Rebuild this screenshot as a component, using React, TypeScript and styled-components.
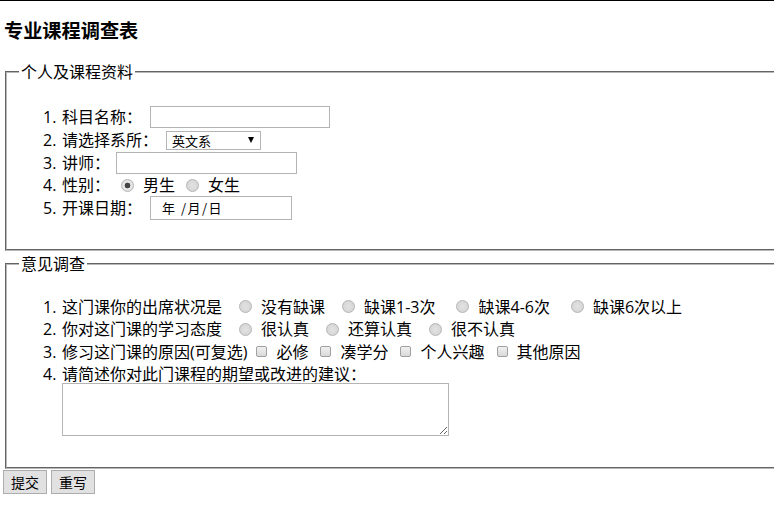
import React from "react";
import styled, { createGlobalStyle } from "styled-components";

const GlobalStyle = createGlobalStyle`
  html, body {
    margin: 0;
    padding: 0;
    overflow: hidden;
    background: #fff;
  }
  body {
    font-family: "Open Sans", "Noto Sans CJK SC", sans-serif;
    color: #000;
  }
`;

const Page = styled.div`
  width: 900px;
  padding: 0 3px;
  border-top: 1px solid #000;
`;

const Title = styled.h3`
  margin: 17px 0 19px;
  padding-left: 1px;
  font-family: "Noto Sans CJK SC", sans-serif;
  font-size: 19.2px;
  line-height: 24px;
  font-weight: bold;
`;

const Section = styled.fieldset<{ $top: number; $bottom: number }>`
  margin: 0 2px;
  padding: ${(p) => p.$top}px 12px ${(p) => p.$bottom}px;
  border: 2px groove #b8b8b8;
  min-width: 0;

  & + & {
    margin-top: 2px;
  }
`;

const Legend = styled.legend`
  padding: 0 2px;
  font-size: 16px;
  line-height: 22px;
`;

const List = styled.ol`
  margin: 0;
  padding: 0 0 0 24px;
  list-style: none;
  counter-reset: item;
`;

const Item = styled.li<{ $h: number; $stack?: boolean }>`
  counter-increment: item;
  display: flex;
  align-items: ${(p) => (p.$stack ? "flex-start" : "center")};
  height: ${(p) => (p.$stack ? "auto" : `${p.$h}px`)};
  font-size: 16px;
  line-height: ${(p) => p.$h}px;
  white-space: nowrap;

  &::before {
    content: counter(item) ".";
    flex: none;
    width: 19px;
  }
`;

const Stack = styled.div`
  display: flex;
  flex-direction: column;
`;

const TextBox = styled.input<{ $w: number; $gap: number }>`
  box-sizing: border-box;
  width: ${(p) => p.$w}px;
  height: 22px;
  margin: 0 0 0 ${(p) => p.$gap}px;
  padding: 0 4px;
  border: 1px solid #b4b4b4;
  background: #fff;
  font: inherit;
  font-size: 14px;
`;

const SelectWrap = styled.span`
  position: relative;
  display: inline-flex;
  margin-left: 8px;

  &::after {
    content: "";
    position: absolute;
    right: 7px;
    top: 6px;
    border-left: 3.5px solid transparent;
    border-right: 3.5px solid transparent;
    border-top: 6px solid #000;
    pointer-events: none;
  }
`;

const Select = styled.select`
  appearance: none;
  box-sizing: border-box;
  width: 95px;
  height: 19px;
  padding: 0 0 0 5px;
  border: 1px solid #b4b4b4;
  border-radius: 0;
  background: #fff;
  color: #000;
  font-family: "Noto Sans CJK SC", sans-serif;
  font-size: 13px;
  line-height: 17px;
`;

const DateBox = styled.span`
  box-sizing: border-box;
  display: inline-flex;
  align-items: center;
  width: 142px;
  height: 24px;
  margin-left: 8px;
  padding-left: 11px;
  border: 1px solid #b4b4b4;
  font-family: "Noto Sans CJK SC", sans-serif;
  font-size: 13px;
  line-height: 22px;
  letter-spacing: 1.5px;
  white-space: pre;
`;

const Choice = styled.label<{ $gap: number }>`
  display: inline-flex;
  align-items: center;
  margin-left: ${(p) => p.$gap}px;

  & > span {
    margin-left: 9px;
  }
`;

const Radio = styled.input.attrs({ type: "radio" })`
  appearance: none;
  box-sizing: border-box;
  flex: none;
  width: 13px;
  height: 13px;
  margin: 0;
  border: 1px solid #b4b4b4;
  border-radius: 50%;
  background: radial-gradient(circle, #e2e2e2 0, #d2d2d2 100%);

  &:checked {
    background: radial-gradient(circle, #444 0 2.6px, #ececec 3.2px, #d2d2d2 100%);
  }
`;

const Check = styled.input.attrs({ type: "checkbox" })`
  appearance: none;
  box-sizing: border-box;
  flex: none;
  width: 11px;
  height: 11px;
  margin: 0;
  border: 1px solid #a0a0a0;
  border-radius: 2px;
  background: linear-gradient(#f0f0f0, #dadada);
`;

const Comment = styled.textarea`
  box-sizing: border-box;
  width: 387px;
  height: 53px;
  margin: -2px 0 0;
  border: 1px solid #b4b4b4;
  font: inherit;
`;

const ButtonBar = styled.div`
  display: flex;
  gap: 4px;
  margin-top: 1px;
`;

const Button = styled.button`
  height: 24px;
  padding: 0 7px;
  border: 1px solid #adadad;
  border-radius: 0;
  background: #e1e1e1;
  color: #000;
  font-family: "Noto Sans CJK SC", sans-serif;
  font-size: 14px;
  line-height: 22px;
`;

const attendance = [
  { label: "没有缺课", gap: 17 },
  { label: "缺课1-3次", gap: 17 },
  { label: "缺课4-6次", gap: 21 },
  { label: "缺课6次以上", gap: 21 },
];
const attitude = ["很认真", "还算认真", "很不认真"];
const reasons = ["必修", "凑学分", "个人兴趣", "其他原因"];

export default function App() {
  return (
    <Page>
      <GlobalStyle />
      <Title>专业课程调查表</Title>
      <form>
        <Section $top={23} $bottom={29}>
          <Legend>个人及课程资料</Legend>
          <List>
            <Item $h={22.75}>
              科目名称：<TextBox $w={180} $gap={8} />
            </Item>
            <Item $h={22.75}>
              请选择系所：
              <SelectWrap>
                <Select defaultValue="英文系">
                  <option>英文系</option>
                  <option>中文系</option>
                  <option>数学系</option>
                </Select>
              </SelectWrap>
            </Item>
            <Item $h={22.75}>
              讲师：<TextBox $w={181} $gap={6} />
            </Item>
            <Item $h={22.75}>
              性别：
              <Choice $gap={11}>
                <Radio name="sex" defaultChecked />
                <span>男生</span>
              </Choice>
              <Choice $gap={11}>
                <Radio name="sex" />
                <span>女生</span>
              </Choice>
            </Item>
            <Item $h={22.75}>
              开课日期：<DateBox>年 /月/日</DateBox>
            </Item>
          </List>
        </Section>
        <Section $top={21} $bottom={31}>
          <Legend>意见调查</Legend>
          <List>
            <Item $h={22.4}>
              这门课你的出席状况是
              {attendance.map((o) => (
                <Choice key={o.label} $gap={o.gap}>
                  <Radio name="attend" />
                  <span>{o.label}</span>
                </Choice>
              ))}
            </Item>
            <Item $h={22.4}>
              你对这门课的学习态度
              {attitude.map((t) => (
                <Choice key={t} $gap={17}>
                  <Radio name="attitude" />
                  <span>{t}</span>
                </Choice>
              ))}
            </Item>
            <Item $h={22.4}>
              修习这门课的原因(可复选)
              {reasons.map((t, i) => (
                <Choice key={t} $gap={i === 0 ? 9 : 12}>
                  <Check />
                  <span>{t}</span>
                </Choice>
              ))}
            </Item>
            <Item $h={22.4} $stack>
              <Stack>
                请简述你对此门课程的期望或改进的建议：
                <Comment />
              </Stack>
            </Item>
          </List>
        </Section>
        <ButtonBar>
          <Button type="submit">提交</Button>
          <Button type="reset">重写</Button>
        </ButtonBar>
      </form>
    </Page>
  );
}
